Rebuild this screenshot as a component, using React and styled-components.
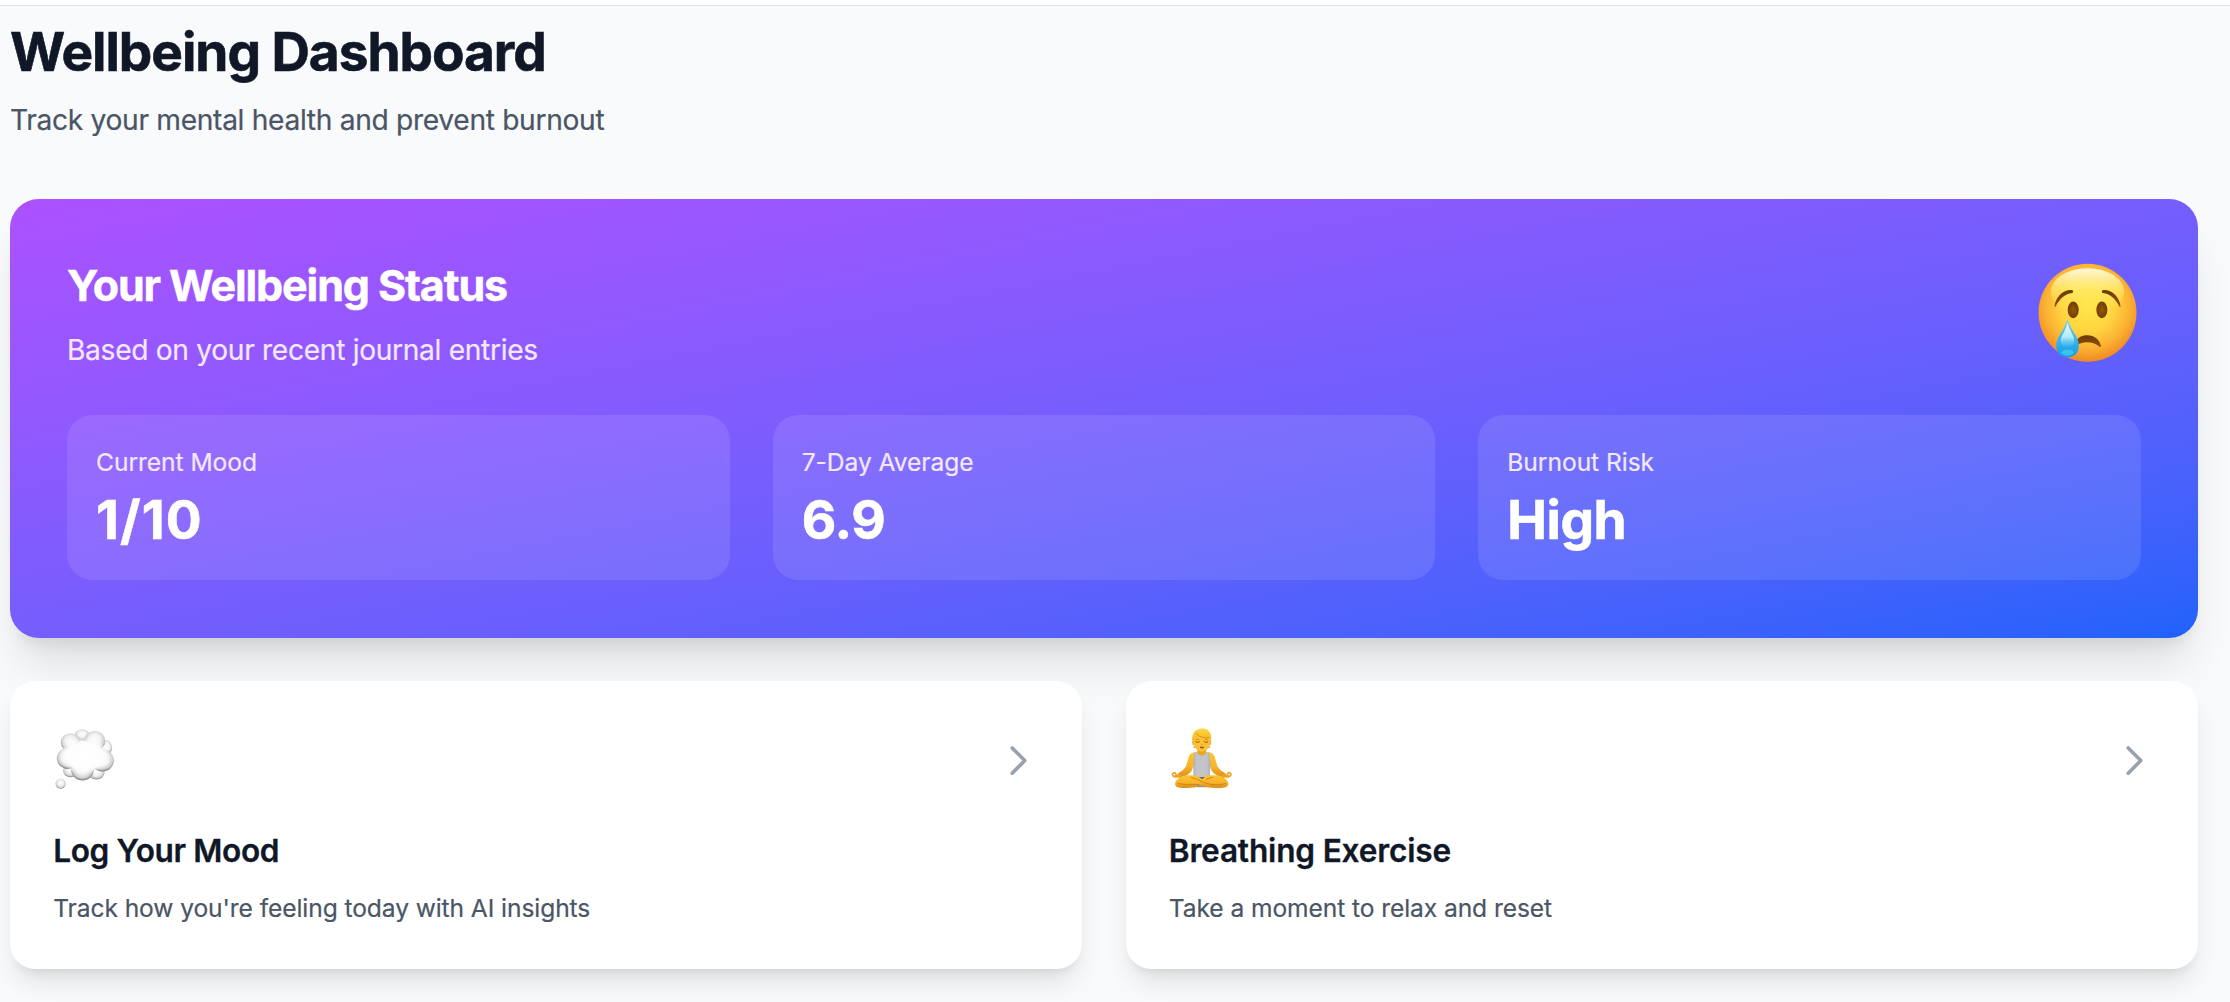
import React from 'react';
import styled, { createGlobalStyle } from 'styled-components';

const GlobalStyle = createGlobalStyle`
    * {
        box-sizing: border-box;
        margin: 0;
    }

    body {
        background-color: #f9fafc;
        font-family: Inter, "Liberation Sans", sans-serif;
        -webkit-font-smoothing: antialiased;
        overflow: hidden;
    }
`;

const NavEdge = styled.div`
    height: 6px;
    background-color: #fdfdfe;
    border-bottom: 1px solid #e1e3e7;
`;

const Page = styled.main`
    width: 2208px;
    height: 996px;
    padding: 14.2px 10px 0;
`;

const PageTitle = styled.h1`
    color: #101828;
    font-size: 53.2px;
    font-weight: 700;
    line-height: 64.8px;
    letter-spacing: -1.05px;
    -webkit-text-stroke: 0.6px;
`;

const PageSubtitle = styled.p`
    margin-top: 14.4px;
    color: #4a5565;
    font-size: 28.2px;
    line-height: 43.2px;
    letter-spacing: -0.33px;
    -webkit-text-stroke: 0.2px;
`;

const StatusBanner = styled.section`
    margin-top: 56.4px;
    padding: 57.6px 57px 58px;
    border-radius: 28.8px;
    color: white;
    background-image: linear-gradient(to bottom right in oklab, #ac51ff, #1e62fb);
    box-shadow: 0 36px 45px -9px rgba(0, 0, 0, 0.1), 0 14.4px 18px -10.8px rgba(0, 0, 0, 0.1);
`;

const BannerHeader = styled.div`
    display: flex;
    align-items: center;
    justify-content: space-between;
    height: 115.2px;
`;

const BannerTitle = styled.h2`
    font-size: 43px;
    font-weight: 700;
    line-height: 57.6px;
    letter-spacing: -1.1px;
    -webkit-text-stroke: 0.5px;
`;

const BannerSubtitle = styled.p`
    margin-top: 14.4px;
    color: #f3e8ff;
    font-size: 28.2px;
    line-height: 43.2px;
    letter-spacing: -0.33px;
    -webkit-text-stroke: 0.2px;
`;

const StatGrid = styled.div`
    display: grid;
    grid-template-columns: repeat(3, 1fr);
    gap: 43px;
    margin-top: 43.2px;
`;

const StatTile = styled.div`
    height: 165px;
    padding: 28.8px 29px 0;
    border-radius: 25.2px;
    background-color: rgba(255, 255, 255, 0.1);
`;

const StatLabel = styled.p`
    color: #f3e8ff;
    font-size: 24.6px;
    line-height: 36px;
    letter-spacing: -0.05px;
    -webkit-text-stroke: 0.2px;
`;

const StatValue = styled.p`
    margin-top: 8px;
    font-size: 53.2px;
    font-weight: 700;
    line-height: 64.8px;
    letter-spacing: ${({ $tracking }) => $tracking}px;
    -webkit-text-stroke: 0.6px;
`;

const ActionGrid = styled.div`
    display: grid;
    grid-template-columns: 1fr 1fr;
    gap: 43.2px;
    margin-top: 43px;
`;

const ActionCard = styled.article`
    padding: 43.2px;
    border-radius: 25.2px;
    background-color: white;
    box-shadow: 0 18px 27px -5.4px rgba(0, 0, 0, 0.1), 0 7.2px 10.8px -7.2px rgba(0, 0, 0, 0.1);
`;

const ActionHeader = styled.div`
    display: flex;
    align-items: center;
    justify-content: space-between;
    height: 72px;
`;

const ActionTitle = styled.h3`
    margin-top: 29.8px;
    color: #101828;
    font-size: 31.6px;
    font-weight: 600;
    line-height: 50.4px;
    letter-spacing: ${({ $tracking }) => $tracking}px;
    -webkit-text-stroke: 0.3px;
`;

const ActionText = styled.p`
    margin-top: 13.4px;
    color: #4a5565;
    font-size: 24.6px;
    line-height: 36px;
    letter-spacing: -0.09px;
    -webkit-text-stroke: 0.2px;
`;

const Emoji = styled.svg`
    display: block;
    width: ${({ $size }) => $size}px;
    height: ${({ $size }) => $size}px;
    overflow: visible;
`;

const Chevron = styled.svg`
    display: block;
    width: 43.2px;
    height: 43.2px;
    fill: none;
    stroke: #99a1af;
    stroke-width: 2;
    stroke-linecap: round;
    stroke-linejoin: round;
`;

const CryingFace = () => (
    <Emoji $size={108} viewBox="37.4 60.2 324 324">
        <defs>
            <radialGradient id="faceSkin" cx="0.5" cy="0.43" r="0.58">
                <stop offset="0" stopColor="#ffe548" />
                <stop offset="0.45" stopColor="#ffd53f" />
                <stop offset="0.75" stopColor="#fbb133" />
                <stop offset="1" stopColor="#ef8722" />
            </radialGradient>
            <linearGradient id="faceShine" x1="0" y1="0" x2="0" y2="1">
                <stop offset="0" stopColor="#fffbe6" stopOpacity="0.95" />
                <stop offset="0.45" stopColor="#fff27a" stopOpacity="0.6" />
                <stop offset="1" stopColor="#ffe94b" stopOpacity="0" />
            </linearGradient>
            <linearGradient id="browInk" x1="0" y1="0" x2="0" y2="1">
                <stop offset="0" stopColor="#6b3a05" />
                <stop offset="1" stopColor="#8d5208" />
            </linearGradient>
            <radialGradient id="eyeInk">
                <stop offset="0" stopColor="#945a0a" />
                <stop offset="1" stopColor="#6d3e05" />
            </radialGradient>
            <linearGradient id="tearFill" x1="0" y1="0" x2="0" y2="1">
                <stop offset="0" stopColor="#7fd0ee" />
                <stop offset="0.45" stopColor="#43b9ee" />
                <stop offset="1" stopColor="#149be4" />
            </linearGradient>
            <linearGradient id="tearShine" x1="0" y1="0" x2="0" y2="1">
                <stop offset="0" stopColor="#e8faff" />
                <stop offset="0.6" stopColor="#b6ebfb" />
                <stop offset="1" stopColor="#55c5f2" stopOpacity="0.2" />
            </linearGradient>
        </defs>
        <circle cx="201" cy="218.5" r="147" fill="url(#faceSkin)" />
        <ellipse cx="201" cy="155" rx="110" ry="70" fill="url(#faceShine)" />
        <path d="M102 199C105 171 127 149 153 150C158 150 160 157 155 159C134 161 118 176 106 198Q103 203 102 199Z" fill="url(#browInk)" />
        <path d="M300 199C297 171 275 149 249 150C244 150 242 157 247 159C268 161 284 176 296 198Q299 203 300 199Z" fill="url(#browInk)" />
        <ellipse cx="158" cy="210" rx="16.5" ry="25" fill="url(#eyeInk)" />
        <ellipse cx="244" cy="210" rx="16.5" ry="25" fill="url(#eyeInk)" />
        <path d="M164 306C172 294 183 286 200 286C222 286 237 300 241 317C242 322 238 322 235 319C225 311 214 307 199 307C188 307 179 310 171 314Z" fill="url(#browInk)" />
        <path d="M141 238C146 255 154 269 165 286C171 296 175 307 175 318C175 340 160 352 141 352C122 352 107 340 107 318C107 307 111 296 117 286C128 269 136 255 141 238Z" fill="url(#tearFill)" />
        <path d="M141 248C145 265 153 278 158 289C163 299 162 310 157 315C149 322 133 322 125 315C119 309 119 299 124 289C130 278 137 265 141 248Z" fill="url(#tearShine)" />
        <ellipse cx="141" cy="338" rx="19" ry="9" fill="#48cff2" opacity="0.7" />
    </Emoji>
);

const cloudPuffs = [
    [200, 98, 17, 22],
    [127, 60, 22, 17],
    [92, 167, 22, 20],
    [170, 173, 24, 21],
    [92, 82, 29, 27],
    [165, 78, 31, 30],
    [84, 130, 33, 32],
    [188, 137, 34, 33],
    [128, 163, 34, 34],
];

const ThoughtCloud = () => (
    <Emoji $size={64.8} viewBox="39.6 39.3 194.4 194.4">
        <defs>
            <radialGradient id="puff" cx="0.5" cy="0.43" r="0.57">
                <stop offset="0" stopColor="#ffffff" />
                <stop offset="0.5" stopColor="#f1f1f1" />
                <stop offset="0.8" stopColor="#cfcfcf" />
                <stop offset="1" stopColor="#777777" />
            </radialGradient>
            <radialGradient id="cloudCore">
                <stop offset="0" stopColor="#ffffff" />
                <stop offset="0.72" stopColor="#fdfdfd" />
                <stop offset="1" stopColor="#fdfdfd" stopOpacity="0" />
            </radialGradient>
        </defs>
        {cloudPuffs.map(([cx, cy, rx, ry]) => (
            <ellipse key={`${cx}-${cy}`} cx={cx} cy={cy} rx={rx} ry={ry} fill="url(#puff)" />
        ))}
        <ellipse cx="135" cy="123" rx="76" ry="55" fill="url(#cloudCore)" />
        <circle cx="62.5" cy="206.5" r="15" fill="url(#puff)" />
    </Emoji>
);

const MeditatingPerson = () => (
    <Emoji $size={64.8} viewBox="41.4 39.3 194.4 194.4">
        <defs>
            <linearGradient id="limb" x1="0" y1="0" x2="0" y2="1">
                <stop offset="0" stopColor="#fbc534" />
                <stop offset="0.55" stopColor="#f8b52a" />
                <stop offset="1" stopColor="#dc8a18" />
            </linearGradient>
            <linearGradient id="shirt" x1="0" y1="0" x2="1" y2="0">
                <stop offset="0" stopColor="#aeafb4" />
                <stop offset="0.2" stopColor="#c3c4c8" />
                <stop offset="0.8" stopColor="#c3c4c8" />
                <stop offset="1" stopColor="#abacb1" />
            </linearGradient>
            <linearGradient id="hair" x1="0" y1="0" x2="0" y2="1">
                <stop offset="0" stopColor="#ffd640" />
                <stop offset="1" stopColor="#f5b121" />
            </linearGradient>
        </defs>
        <path d="M126 98H153V112Q157 116 164 117L154 132H124L115 117Q124 115 126 112Z" fill="#eda524" />
        <path d="M119 112C106 113 101 121 99 132L92 155C87 164 77 170 67 177L74 189C88 184 103 178 109 168L119 143Z" fill="url(#limb)" />
        <path d="M160 112C173 113 178 121 180 132L187 155C192 164 202 170 213 177L205 189C191 184 176 178 170 168L160 143Z" fill="url(#limb)" />
        <path d="M117 112L125 111C129 125 150 125 154 111L162 112C162 126 165 135 166 142L164 190H115L114 142C116 134 117 124 117 112Z" fill="url(#shirt)" />
        <path d="M94 181C80 181 62 194 60 204C58 215 67 218 82 219C106 220 127 218 150 209L173 187Q168 180 154 183L140 188L116 181Z" fill="url(#limb)" />
        <path d="M128 206L149 207L154 217H126Z" fill="#8f929a" />
        <path d="M185 181C199 181 217 194 219 204C221 215 212 218 197 219C173 220 151 219 129 209L106 187Q111 180 125 183L139 188L163 181Z" fill="url(#limb)" />
        <path d="M107 187C128 192 144 205 174 210M172 187L153 193M68 206Q96 212 130 209M211 206Q193 212 171 210" fill="none" stroke="#c87e17" strokeWidth="2.6" strokeLinecap="round" />
        <path d="M131 186H149L141 193Z" fill="#62656e" />
        <path d="M73 180L60 184C53 187 49 178 54 175C59 171 64 176 62 181M205 180L218 184C225 187 230 178 225 175C220 171 215 176 217 181" fill="none" stroke="#eba322" strokeWidth="5" strokeLinecap="round" strokeLinejoin="round" />
        <path d="M60 185L77 184M219 185L202 184" stroke="#e8a523" strokeWidth="7" strokeLinecap="round" />
        <ellipse cx="116" cy="83" rx="5" ry="8" fill="#efaa20" />
        <ellipse cx="163" cy="83" rx="5" ry="8" fill="#efaa20" />
        <path d="M116 55H164V84C164 99 152 109 140 110C128 109 116 99 116 84Z" fill="#fcc136" />
        <path d="M112 81C108 60 116 43 139 41C158 40 170 54 168 72L166 83C163 78 163 73 161 68C148 69 135 65 129 58C127 66 118 70 116 81Z" fill="url(#hair)" />
        <path d="M122 54C130 67 148 70 162 68" fill="none" stroke="#c98916" strokeWidth="2.6" />
        <path d="M122 75Q127 71 132 75M148 75Q153 71 158 75" fill="none" stroke="#c07c16" strokeWidth="2.4" />
        <path d="M122 81Q127 85 132 81M148 81Q153 85 158 81" fill="none" stroke="#7d4a14" strokeWidth="2.8" strokeLinecap="round" />
        <path d="M137 88Q140 92 143 88" fill="none" stroke="#dc951b" strokeWidth="2" />
        <path d="M133 97Q137 93 140 96Q143 93 147 97Q140 104 133 97Z" fill="#9c4f28" />
        <circle cx="117" cy="97" r="2.2" fill="#b5802d" />
        <circle cx="162" cy="97" r="2.2" fill="#b5802d" />
    </Emoji>
);

const stats = [
    { label: 'Current Mood', value: '1/10', tracking: 1.1 },
    { label: '7-Day Average', value: '6.9', tracking: -0.2 },
    { label: 'Burnout Risk', value: 'High', tracking: -0.5 },
];

const actions = [
    {
        icon: <ThoughtCloud />,
        title: 'Log Your Mood',
        text: "Track how you're feeling today with AI insights",
        tracking: -0.36,
    },
    {
        icon: <MeditatingPerson />,
        title: 'Breathing Exercise',
        text: 'Take a moment to relax and reset',
        tracking: -0.18,
    },
];

export default function App() {
    return (<>
        <GlobalStyle />
        <NavEdge />
        <Page>
            <PageTitle>Wellbeing Dashboard</PageTitle>
            <PageSubtitle>Track your mental health and prevent burnout</PageSubtitle>

            <StatusBanner>
                <BannerHeader>
                    <div>
                        <BannerTitle>Your Wellbeing Status</BannerTitle>
                        <BannerSubtitle>Based on your recent journal entries</BannerSubtitle>
                    </div>
                    <CryingFace />
                </BannerHeader>
                <StatGrid>
                    {stats.map(({ label, value, tracking }) => (
                        <StatTile key={label}>
                            <StatLabel>{label}</StatLabel>
                            <StatValue $tracking={tracking}>{value}</StatValue>
                        </StatTile>
                    ))}
                </StatGrid>
            </StatusBanner>

            <ActionGrid>
                {actions.map(({ icon, title, text, tracking }) => (
                    <ActionCard key={title}>
                        <ActionHeader>
                            {icon}
                            <Chevron viewBox="0 0 24 24">
                                <path d="M9 5l7 7-7 7" />
                            </Chevron>
                        </ActionHeader>
                        <ActionTitle $tracking={tracking}>{title}</ActionTitle>
                        <ActionText>{text}</ActionText>
                    </ActionCard>
                ))}
            </ActionGrid>
        </Page>
    </>);
}
